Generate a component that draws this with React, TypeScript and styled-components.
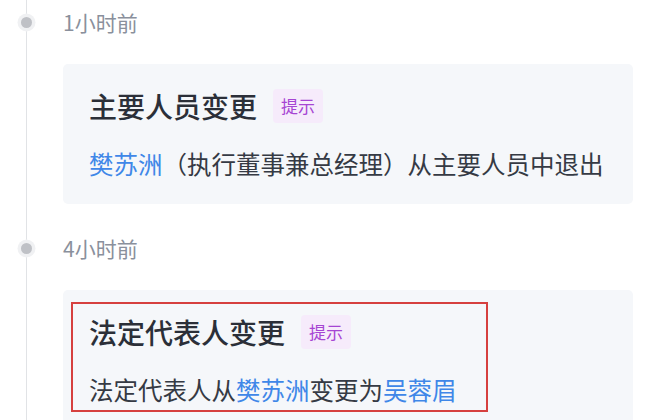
import React from "react";
import styled, { createGlobalStyle } from "styled-components";

const GlobalStyle = createGlobalStyle`
  html, body {
    margin: 0;
    padding: 0;
    background: #ffffff;
    font-family: "Noto Sans CJK SC", "Noto Sans", sans-serif;
  }
`;

const Page = styled.div`
  width: 660px;
  height: 420px;
  overflow: hidden;
  box-sizing: border-box;
  padding-right: 27px;
`;

const Item = styled.div`
  display: grid;
  grid-template-columns: 63px 1fr;
  grid-template-rows: auto auto;
  padding: 8px 0 22px;
  position: relative;
  &::before {
    content: "";
    position: absolute;
    left: 26px;
    top: 0;
    bottom: 0;
    width: 1px;
    background: #e1e3e6;
  }
`;

const DotCell = styled.div`
  display: flex;
  align-items: center;
  padding-left: 21px;
  height: 28px;
  position: relative;
  z-index: 1;
`;

const Dot = styled.span`
  width: 11px;
  height: 11px;
  border-radius: 50%;
  background: #bfc1c6;
  box-shadow: 0 0 0 3.5px #f0f1f3;
`;

const Time = styled.div`
  font-size: 21px;
  line-height: 28px;
  color: #8a909c;
`;

const Card = styled.div`
  grid-column: 2;
  margin-top: 28px;
  background: #f5f7fa;
  border-radius: 5px;
  padding: 22px 26px 23.5px;
  position: relative;
`;

const TitleRow = styled.div`
  display: flex;
  align-items: center;
  height: 40px;
`;

const Title = styled.span`
  font-size: 28px;
  line-height: 40px;
  font-weight: 500;
  color: #2b2f38;
`;

const Badge = styled.span`
  margin-left: 16px;
  height: 34px;
  line-height: 34px;
  padding: 0 8px;
  font-size: 17px;
  border-radius: 4px;
  background: #f6ebfb;
  color: #a645d3;
`;

const Body = styled.div`
  margin-top: 19.5px;
  font-size: 24.5px;
  line-height: 35px;
  color: #353a44;
  white-space: nowrap;
`;

const Link = styled.span`
  color: #3f87e8;
`;

const Highlight = styled.div`
  position: absolute;
  left: 8px;
  top: 12px;
  width: 417px;
  height: 110px;
  box-sizing: border-box;
  border: 2px solid #d6403f;
  pointer-events: none;
`;

export default function App() {
  return (
    <>
      <GlobalStyle />
      <Page>
        <Item>
          <DotCell>
            <Dot />
          </DotCell>
          <Time>1小时前</Time>
          <Card>
            <TitleRow>
              <Title>主要人员变更</Title>
              <Badge>提示</Badge>
            </TitleRow>
            <Body>
              <Link>樊苏洲</Link>（执行董事兼总经理）从主要人员中退出
            </Body>
          </Card>
        </Item>
        <Item>
          <DotCell>
            <Dot />
          </DotCell>
          <Time>4小时前</Time>
          <Card>
            <TitleRow>
              <Title>法定代表人变更</Title>
              <Badge>提示</Badge>
            </TitleRow>
            <Body>
              法定代表人从<Link>樊苏洲</Link>变更为<Link>吴蓉眉</Link>
            </Body>
            <Highlight />
          </Card>
        </Item>
      </Page>
    </>
  );
}
